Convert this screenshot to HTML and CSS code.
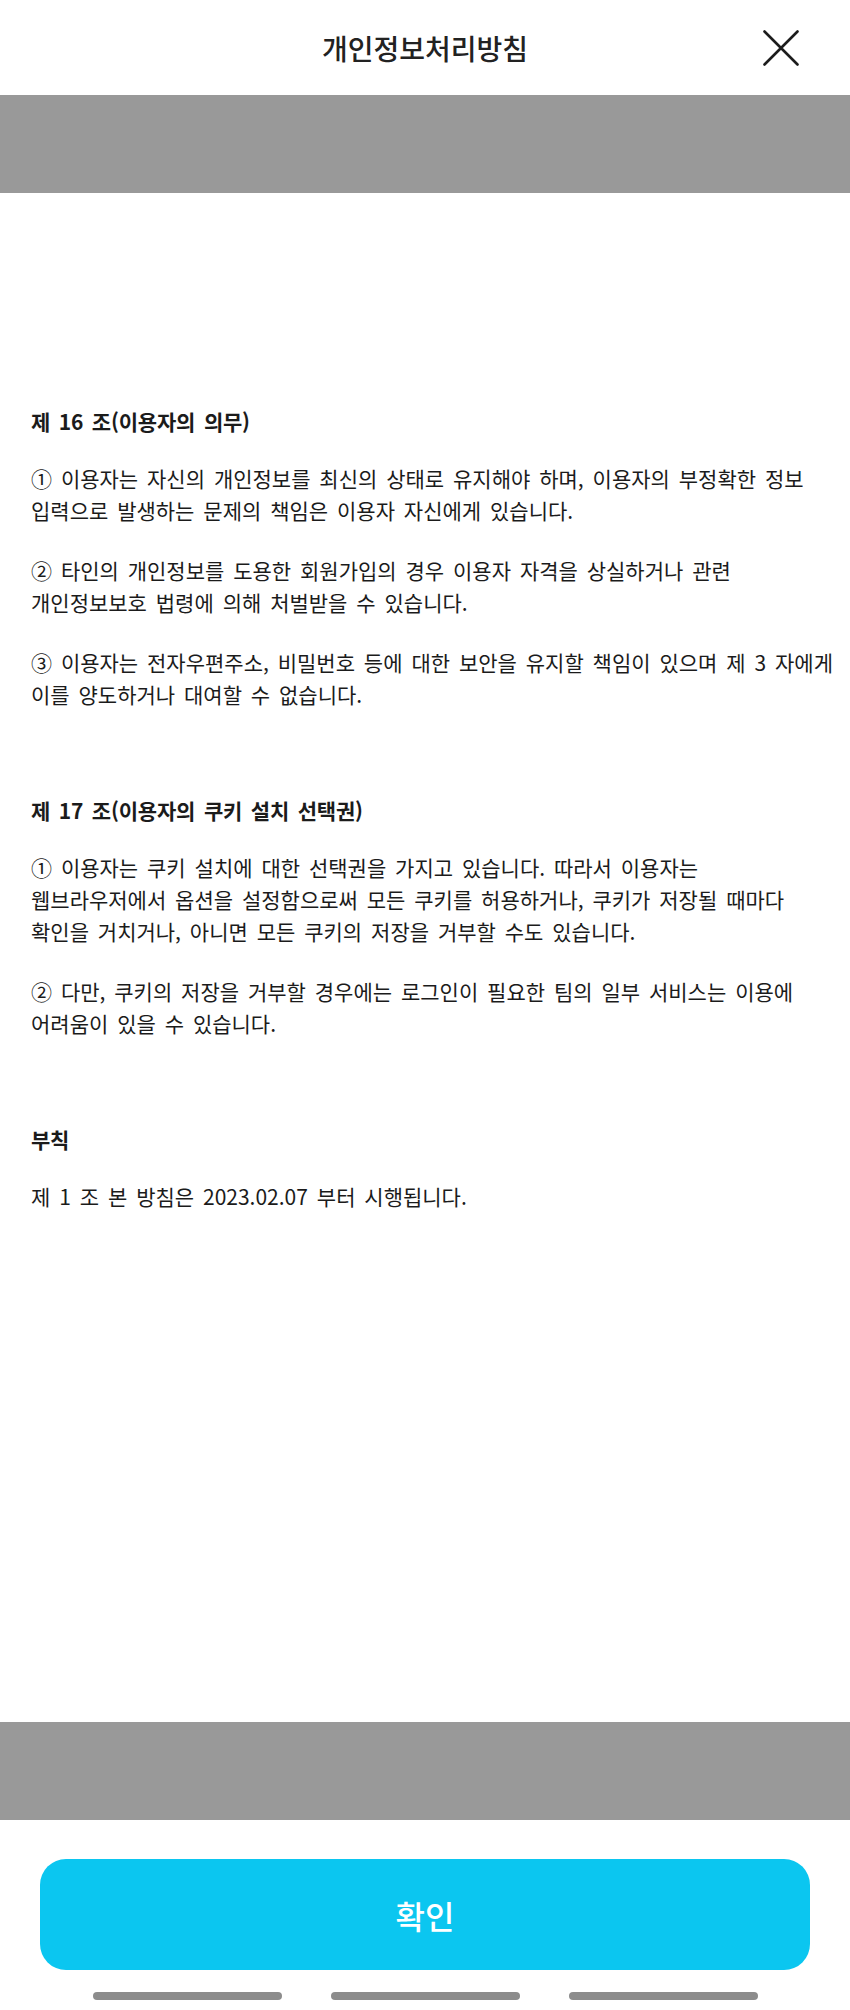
FILE: index.html
```html
<!DOCTYPE html>
<html lang="ko">
<head>
<meta charset="utf-8">
<title>개인정보처리방침</title>
<link rel="stylesheet" href="styles.css">
</head>
<body>
<div class="page">
  <header class="header">
    <span class="spacer"></span>
    <h1 class="title">개인정보처리방침</h1>
    <button class="close" aria-label="닫기">
      <svg width="36" height="36" viewBox="0 0 36 36" fill="none" stroke="#1c1c1c" stroke-width="2.6" stroke-linecap="round">
        <path d="M1.5 1.5 L34.5 34.5 M34.5 1.5 L1.5 34.5"/>
      </svg>
    </button>
  </header>
  <div class="band"></div>
  <main class="content">
    <section class="section">
      <h2 class="heading">제 16 조(이용자의 의무)</h2>
      <p class="para">① 이용자는 자신의 개인정보를 최신의 상태로 유지해야 하며, 이용자의 부정확한 정보<br>입력으로 발생하는 문제의 책임은 이용자 자신에게 있습니다.</p>
      <p class="para">② 타인의 개인정보를 도용한 회원가입의 경우 이용자 자격을 상실하거나 관련<br>개인정보보호 법령에 의해 처벌받을 수 있습니다.</p>
      <p class="para">③ 이용자는 전자우편주소, 비밀번호 등에 대한 보안을 유지할 책임이 있으며 제 3 자에게<br>이를 양도하거나 대여할 수 없습니다.</p>
    </section>
    <section class="section">
      <h2 class="heading">제 17 조(이용자의 쿠키 설치 선택권)</h2>
      <p class="para">① 이용자는 쿠키 설치에 대한 선택권을 가지고 있습니다. 따라서 이용자는<br>웹브라우저에서 옵션을 설정함으로써 모든 쿠키를 허용하거나, 쿠키가 저장될 때마다<br>확인을 거치거나, 아니면 모든 쿠키의 저장을 거부할 수도 있습니다.</p>
      <p class="para">② 다만, 쿠키의 저장을 거부할 경우에는 로그인이 필요한 팀의 일부 서비스는 이용에<br>어려움이 있을 수 있습니다.</p>
    </section>
    <section class="section">
      <h2 class="heading">부칙</h2>
      <p class="para">제 1 조 본 방침은 2023.02.07 부터 시행됩니다.</p>
    </section>
  </main>
  <div class="band"></div>
  <footer class="footer">
    <button class="confirm">확인</button>
    <div class="nav">
      <span class="nav-bar"></span>
      <span class="nav-bar"></span>
      <span class="nav-bar"></span>
    </div>
  </footer>
</div>
</body>
</html>
```

FILE: styles.css
```css
* {
  box-sizing: border-box;
}

html, body {
  margin: 0;
  padding: 0;
  background: #ffffff;
}

body {
  font-family: "Noto Sans CJK KR", "Noto Sans", sans-serif;
  color: #1b1b1b;
}

.page {
  width: 850px;
  height: 2010px;
  display: flex;
  flex-direction: column;
  overflow: hidden;
}

.header {
  height: 95px;
  flex: 0 0 95px;
  display: grid;
  grid-template-columns: 1fr auto 1fr;
  align-items: center;
}

.title {
  margin: 0;
  font-size: 28px;
  font-weight: 500;
  color: #222222;
  line-height: 1;
}

.close {
  justify-self: end;
  margin-right: 51px;
  padding: 0;
  border: 0;
  background: none;
  width: 36px;
  height: 36px;
  display: flex;
}

.band {
  flex: 0 0 98px;
  height: 98px;
  background: #999999;
}

.content {
  flex: 1 1 auto;
  padding: 212px 0 0 31px;
  display: flex;
  flex-direction: column;
  gap: 56px;
}

.section {
  display: flex;
  flex-direction: column;
}

.heading {
  margin: 0 0 25px;
  font-size: 21px;
  font-weight: 700;
  line-height: 32px;
  letter-spacing: -0.2px;
  word-spacing: 3px;
}

.para {
  margin: 0 0 28px;
  font-size: 21px;
  font-weight: 400;
  line-height: 32px;
  word-spacing: 3px;
  white-space: nowrap;
}

.footer {
  flex: 0 0 190px;
  display: flex;
  flex-direction: column;
  padding: 39px 40px 0;
}

.confirm {
  height: 111px;
  border: 0;
  border-radius: 26px;
  background: #0bc6f0;
  color: #ffffff;
  font-family: "Noto Sans CJK KR", "Noto Sans", sans-serif;
  font-size: 32px;
  font-weight: 500;
  padding: 0;
}

.nav {
  margin-top: 22px;
  display: flex;
  justify-content: center;
  gap: 49px;
}

.nav-bar {
  width: 189px;
  height: 8px;
  border-radius: 4px;
  background: #8c8c8c;
}
```
